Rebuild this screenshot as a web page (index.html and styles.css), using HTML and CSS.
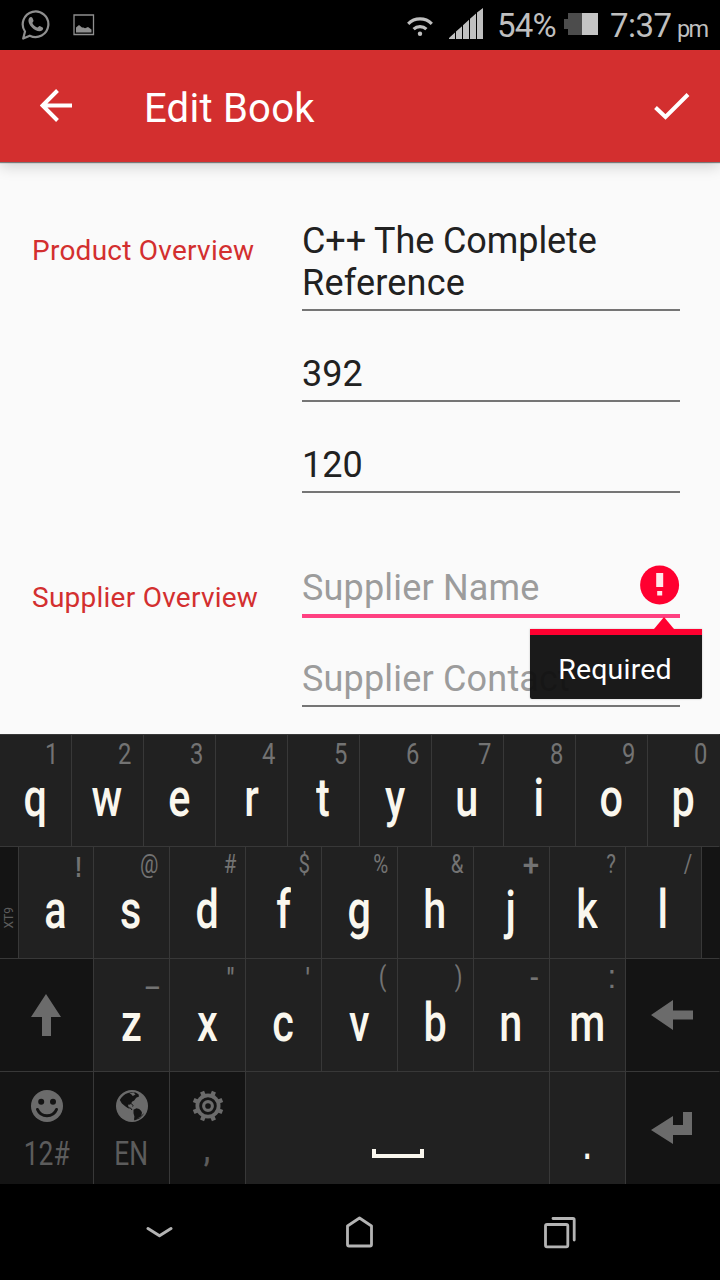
FILE: index.html
```html
<!DOCTYPE html>
<html lang="en">
<head>
<meta charset="utf-8">
<title>Edit Book</title>
<link rel="stylesheet" href="styles.css">
</head>
<body>
<div class="screen">
  <header class="status">
    <svg class="status-chat" width="30" height="32" viewBox="0 0 30 32"><path d="M2.200 29.500 4 22.500A12.800 12.800 0 1 1 8.800 26.700Z" fill="none" stroke="#8f8f8f" stroke-width="2.200" stroke-linejoin="round"/><path d="M8.200 9c1-1.500 2.600-1.500 3.300 0l1 2.600c.3.900-1.400 1.900-1 2.700 1 2 2.600 3.500 4.700 4.200.9.200 1.700-1.800 2.600-1.500l2.800 1.400c1 .6.500 2.200-.6 3-1.800 1.300-4 .9-6.300-.2-3-1.500-5.400-3.900-6.700-7-.7-2-.8-3.700.2-5.200Z" fill="#8f8f8f"/></svg>
    <svg class="status-photo" width="22" height="22" viewBox="0 0 22 22"><path d="M1 1h19.500v19.500H1Z" fill="none" stroke="#8f8f8f" stroke-width="1.300"/><path d="M3 18.500v-5l3-2.500 3 2.500h1.500l1.500.8 3-1.300 3.500 2.500v3Z" fill="#8f8f8f"/></svg>
    <svg class="status-wifi" width="26" height="22" viewBox="0 0 26 22"><g fill="none" stroke="#bfbfbf" stroke-width="3.200"><path d="M1.200 8.800a16.600 16.600 0 0 1 23.600 0"/><path d="M6.600 14.200a9.200 9.200 0 0 1 12.800 0"/></g><circle cx="13" cy="18.800" r="2.200" fill="#bfbfbf"/></svg>
    <svg class="status-signal" width="34" height="31" viewBox="0 0 34 31"><path d="M0 31v-1l6-5.500V31ZM7 31v-7.500l6-5.300V31ZM14 31V17.200l6-5.400V31ZM21 31V10.800l6-5.300V31ZM28 31V4.600L34 0v31Z" fill="#bfbfbf"/></svg>
    <span class="status-text percent">54%</span>
    <svg class="status-battery" width="34" height="22" viewBox="0 0 34 22"><path d="M4 0h14v22H4v-6H0V6h4Z" fill="#4c4c4c"/><path d="M18 0h16v22H18Z" fill="#c4c4c4"/></svg>
    <span class="status-text clock">7:37</span>
    <span class="status-text meridiem">pm</span>
  </header>

  <div class="appbar">
    <svg class="back" width="34" height="34" viewBox="0 0 34 34"><path d="M17.500 1.500 2.500 16.500l15 15M2.500 16.500H32" fill="none" stroke="#fff" stroke-width="4"/></svg>
    <h1 class="title">Edit Book</h1>
    <svg class="done" width="36" height="28" viewBox="0 0 36 28"><path d="M1.500 14.500 11.500 24 34 1.500" fill="none" stroke="#fff" stroke-width="4"/></svg>
  </div>

  <main class="form">
    <section class="group">
      <h2 class="label">Product Overview</h2>
      <div class="fields">
        <div class="field title-field">C++ The Complete<br><span class="second-line">Reference</span></div>
        <div class="field">392</div>
        <div class="field">120</div>
      </div>
    </section>
    <section class="group supplier">
      <h2 class="label">Supplier Overview</h2>
      <div class="fields">
        <div class="field hint-text invalid">
          <span>Supplier Name</span>
          <svg class="error-icon" width="40" height="40" viewBox="0 0 40 40"><circle cx="19.600" cy="20" r="19.500" fill="#ff0030"/><path d="M16.200 8h7v14h-7ZM17.200 26h5v4.500h-5Z" fill="#ffe6ea"/></svg>
        </div>
        <div class="field hint-text">Supplier Contact</div>
      </div>
    </section>
    <div class="tooltip">Required</div>
  </main>

  <div class="keyboard">
    <div class="row row-top">
      <div class="key"><span class="alt one">1</span><span class="main">q</span></div>
      <div class="key"><span class="alt">2</span><span class="main">w</span></div>
      <div class="key"><span class="alt">3</span><span class="main">e</span></div>
      <div class="key"><span class="alt">4</span><span class="main">r</span></div>
      <div class="key"><span class="alt">5</span><span class="main">t</span></div>
      <div class="key"><span class="alt">6</span><span class="main">y</span></div>
      <div class="key"><span class="alt">7</span><span class="main">u</span></div>
      <div class="key"><span class="alt">8</span><span class="main">i</span></div>
      <div class="key"><span class="alt">9</span><span class="main">o</span></div>
      <div class="key"><span class="alt">0</span><span class="main">p</span></div>
    </div>
    <div class="row row-home">
      <div class="key dark side"><span class="xt9">XT9</span></div>
      <div class="key"><span class="alt bang">!</span><span class="main">a</span></div>
      <div class="key"><span class="alt inset">@</span><span class="main">s</span></div>
      <div class="key"><span class="alt">#</span><span class="main">d</span></div>
      <div class="key"><span class="alt inset">$</span><span class="main">f</span></div>
      <div class="key"><span class="alt">%</span><span class="main">g</span></div>
      <div class="key"><span class="alt">&amp;</span><span class="main">h</span></div>
      <div class="key"><span class="alt plus">+</span><span class="main">j</span></div>
      <div class="key"><span class="alt">?</span><span class="main">k</span></div>
      <div class="key"><span class="alt">/</span><span class="main">l</span></div>
      <div class="key dark"></div>
    </div>
    <div class="row row-low">
      <div class="key dark center"><svg width="30" height="42" viewBox="0 0 30 42"><path d="M15 0 30 23H20v19h-9V23H0Z" fill="#6b6b6b"/></svg></div>
      <div class="key"><span class="alt under">_</span><span class="main">z</span></div>
      <div class="key"><span class="alt quote">"</span><span class="main">x</span></div>
      <div class="key"><span class="alt quote">'</span><span class="main">c</span></div>
      <div class="key"><span class="alt">(</span><span class="main">v</span></div>
      <div class="key"><span class="alt">)</span><span class="main">b</span></div>
      <div class="key"><span class="alt dash">-</span><span class="main">n</span></div>
      <div class="key"><span class="alt colon">:</span><span class="main">m</span></div>
      <div class="key dark center"><svg width="42" height="30" viewBox="0 0 42 30"><path d="M0 15 22 0v10.500h20v9H22V30Z" fill="#6b6b6b"/></svg></div>
    </div>
    <div class="row row-bottom">
      <div class="key dark fn">
        <svg width="32" height="32" viewBox="0 0 32 32"><circle cx="16" cy="16" r="16" fill="#6b6b6b"/><circle cx="10.200" cy="11.800" r="3" fill="#141414"/><circle cx="22" cy="11.800" r="3" fill="#141414"/><path d="M6.500 19.500a10.300 10.300 0 0 0 19 0" fill="none" stroke="#141414" stroke-width="3" stroke-linecap="round"/></svg>
        <span class="fn-text">12#</span>
      </div>
      <div class="key dark fn">
        <svg width="32" height="32" viewBox="0 0 32 32"><circle cx="16" cy="16" r="16" fill="#6b6b6b"/><path d="M3.800 10C5.500 6.800 8.500 4 12 2.900l3.500-.7 4 .2 3 1.800.5 2.300-2.800 1.300-2 2.800-2.200 1.200-.8 1.700-2.400.8-.8 1.500 1 1.700-1.300.5-2.500-1.800-3.300-2.700Z" fill="#141414"/><path d="M13.500 3.200l4-.7 2 1.900-2.700 1.700-1.300-1.700Z" fill="#6b6b6b"/><path d="M13 14.300l2-.8 2.200 2-.6 1M12 17.800l2.500.2 1.500 2" fill="none" stroke="#141414" stroke-width="1"/><path d="M17.500 19.800l3-1.500 2.700.6 2 2 .8 1.800-.8 3.200-3 2-3 2-1.200-.2.400-3.200-.9-3.200Z" fill="#141414"/><path d="M18.500 30A14.600 14.600 0 0 0 27.500 24" fill="none" stroke="#141414" stroke-width=".9"/></svg>
        <span class="fn-text">EN</span>
      </div>
      <div class="key dark fn">
        <svg width="34" height="34" viewBox="-17 -17 34 34"><g fill="#6b6b6b"><path id="tooth" d="M-2.300-16.500h4.600V16.500h-4.600Z" transform="rotate(22.500)"/><use href="#tooth" transform="rotate(45)"/><use href="#tooth" transform="rotate(90)"/><use href="#tooth" transform="rotate(135)"/><circle r="13.300"/></g><circle r="7.800" fill="#6b6b6b" stroke="#141414" stroke-width="3"/><circle r="3" fill="#141414"/></svg>
        <span class="fn-text comma">,</span>
      </div>
      <div class="key space"><svg width="52" height="9" viewBox="0 0 52 9"><path d="M0 0h4v5h44V0h4v9H0Z" fill="#faf7ee"/></svg></div>
      <div class="key period"><span class="main">.</span></div>
      <div class="key dark center"><svg width="42" height="32" viewBox="0 0 42 32"><path d="M0 18 22 4v9h10V0h9v23H22v9Z" fill="#6b6b6b"/></svg></div>
    </div>
  </div>

  <nav class="nav">
    <svg width="28" height="14" viewBox="0 0 28 14"><path d="M2 3.500 13.500 10.700 25 3.500" fill="none" stroke="#b4b4b4" stroke-width="3" stroke-linecap="round" stroke-linejoin="round"/></svg>
    <svg width="28" height="32" viewBox="0 0 28 32"><path d="M13.500 2 25.500 10v18.500q0 1.500-1.500 1.500H3q-1.500 0-1.500-1.500V10Z" fill="none" stroke="#b4b4b4" stroke-width="2.800" stroke-linejoin="round"/></svg>
    <svg width="32" height="33" viewBox="0 0 32 33"><g fill="none" stroke="#b4b4b4" stroke-width="2.800" stroke-linecap="round"><rect x="1.500" y="8.500" width="22.300" height="22.300" rx="1.500"/><path d="M9 2.500h20q1.200 0 1.200 1.200V24"/></g></svg>
  </nav>
</div>
</body>
</html>
```
FILE: styles.css
```css
* { box-sizing: border-box; }
body { margin: 0; background: #000; font-family: Roboto, "Noto Sans", sans-serif; }
svg { display: block; flex: none; }
h1, h2 { margin: 0; font-weight: 400; }

.screen { width: 720px; height: 1280px; display: flex; flex-direction: column; overflow: hidden; }

.status { height: 50px; flex: none; display: flex; align-items: flex-start; background: #000; color: #bfbfbf; }
.status-chat { margin: 9px 0 0 21px; }
.status-photo { margin: 14px 0 0 22px; }
.status-wifi { margin: 15px 0 0 312px; }
.status-signal { margin: 8px 0 0 16px; }
.status-battery { margin: 13px 0 0 0; }
.status-text { line-height: 52px; white-space: nowrap; flex: none; }
.percent { margin-left: 14px; width: 67px; font-size: 33px; letter-spacing: -.8px; }
.clock { margin-left: 12px; width: 67px; font-size: 33px; letter-spacing: -.5px; }
.meridiem { font-size: 23.500px; line-height: 58px; letter-spacing: -1.800px; }

.appbar { height: 112px; flex: none; display: flex; align-items: flex-start; background: #d32f2f; color: #fff; position: relative; z-index: 1; box-shadow: 0 1px 1px rgba(0,0,0,.45), 0 4px 14px rgba(0,0,0,.18); }
.back { margin: 39px 0 0 40px; }
.title { margin-left: 70px; font-size: 40px; line-height: 118px; letter-spacing: .25px; }
.done { margin: 43px 30px 0 auto; }

.form { height: 572px; flex: none; padding: 58px 40px 0 32px; background: #fafafa; position: relative; }
.group { display: grid; grid-template-columns: 270px 378px; }
.supplier { margin-top: 74px; }
.label { color: #d32f2f; font-size: 28px; line-height: 62px; white-space: nowrap; letter-spacing: .25px; }
.fields { display: flex; flex-direction: column; gap: 42px; }
.supplier .fields { gap: 40px; }
.field { padding-bottom: 5px; border-bottom: 2px solid #757575; color: #212121; font-size: 36px; line-height: 42px; white-space: nowrap; }
.title-field { letter-spacing: -.1px; }
.second-line { letter-spacing: .2px; }
.hint-text { color: #9c9c9c; letter-spacing: .18px; }
.invalid { display: flex; justify-content: space-between; border-bottom: 4px solid #ff4081; }
.error-icon { margin: -2px 0 0; }
.tooltip { position: absolute; left: 530px; top: 467px; width: 172px; height: 70px; padding-right: 2px; border-top: 6px solid #ff0030; border-radius: 0 0 2px 2px; background: rgba(17,17,17,.96); color: #fff; font-size: 28.5px; line-height: 70px; text-align: center; box-shadow: 0 0 2px rgba(0,0,0,.25); background-clip: padding-box; letter-spacing: .2px; }
.tooltip::before { content: ""; position: absolute; left: 124px; top: -18px; border: 10px solid transparent; border-top: 0; border-bottom: 12px solid #ff0030; }

.keyboard { flex: none; height: 450px; color: #faf7ee; }
.row { display: grid; }
.row-top { grid-template-columns: repeat(10, 72px); height: 112px; }
.row-home { grid-template-columns: 19px 75px repeat(8, 76px) 18px; height: 112px; }
.row-low { grid-template-columns: 94px repeat(7, 76px) 94px; height: 113px; }
.row-bottom { grid-template-columns: 94px 76px 76px 304px 76px 94px; height: 113px; }
.key { display: flex; flex-direction: column; align-items: center; background: #212121; border-top: 1px solid #383838; border-right: 1px solid #383838; min-width: 0; }
.key:last-child { border-right-color: transparent; }
.dark { background: #141414; }
.center { justify-content: center; padding-right: 1px; }
.alt { align-self: flex-end; height: 30px; margin-right: 12px; font-size: 29px; line-height: 38px; color: #737373; transform: scaleX(.82); transform-origin: right; }
.one { margin-right: 13px; }
.main { height: 64px; padding-right: 1px; font-size: 53px; line-height: 67px; font-weight: 500; transform: scaleX(.78); }
.row-low .main { margin-top: 1px; }
.row-home .alt { font-size: 25px; line-height: 36px; margin-right: 9px; }
.row-home .inset { margin-right: 11px; }
.row-home .bang { font-size: 30px; line-height: 40px; margin-right: 11px; font-family: "Liberation Sans", sans-serif; font-weight: 700; transform: scaleX(.7); }
.row-home .plus { font-size: 31px; line-height: 37px; font-weight: 500; margin-right: 10px; transform: scaleX(.95); }
.row-low .alt { font-size: 27px; line-height: 37px; margin-right: 11px; }
.row-low .under { font-weight: 500; margin-right: 10px; line-height: 37px; transform: scaleX(1.1); }
.row-low .quote { font-weight: 500; font-size: 29px; line-height: 41px; }
.row-low .dash { font-weight: 500; line-height: 38px; margin-right: 10px; transform: scaleX(1); }
.row-low .colon { font-family: "Liberation Sans", sans-serif; font-size: 33px; font-weight: 400; line-height: 36px; margin-right: 9px; transform: scaleX(.95); }
.side { justify-content: flex-end; padding-bottom: 30px; }
.xt9 { writing-mode: vertical-rl; transform: rotate(180deg); font-size: 12px; line-height: 16px; color: #5c5c5c; }
.fn { padding-top: 18px; }
.fn svg { height: 32px; }
.fn-text { font-size: 33px; line-height: 48px; margin-top: 8px; color: #5c5c5c; transform: scaleX(.8); }
.comma { font-weight: 700; margin-top: 4px; }
.space { padding-top: 77px; }
.period { padding-top: 37px; }
.period .main { font-family: "Liberation Sans", sans-serif; font-weight: 400; font-size: 50px; line-height: 66px; }

.nav { height: 96px; flex: none; display: grid; grid-template-columns: repeat(3, 200px); justify-content: center; align-items: center; justify-items: center; background: #000; }
```
